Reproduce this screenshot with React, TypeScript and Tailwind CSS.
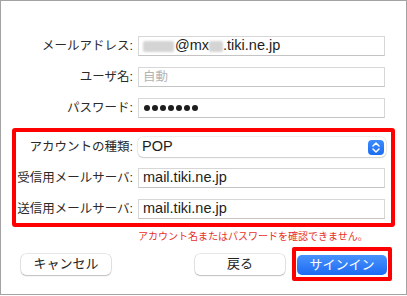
import React from 'react';

const JP = "font-['Liberation_Sans','Noto_Sans_CJK_JP',sans-serif]";

const Label: React.FC<{ w: string; children: React.ReactNode }> = ({ w, children }) => (
  <div className={`${w} shrink-0 text-right text-[12.5px] leading-[20px] text-[#2a2a2a]`}>{children}</div>
);

const Field: React.FC<{ children?: React.ReactNode }> = ({ children }) => (
  <div className="w-[247px] h-[20px] flex items-center pl-[4px] bg-white border border-[#d7d7d7] border-b-[#c4c4c4] text-[14.5px] text-[#1d1d1d]">
    {children}
  </div>
);

const Blur: React.FC<{ w: string }> = ({ w }) => (
  <span className={`${w} h-[11px] inline-block bg-[#d4d4d4] blur-[1px] rounded-[2px]`} />
);

export default function App() {
  return (
    <div className={`${JP} w-[407px] h-[295px] bg-white border border-[#a3a3a3] flex flex-col pt-[35px]`}>
      <div className="flex flex-col gap-[11px]">
        <div className="flex items-center gap-[5px]">
          <Label w="w-[132px]">メールアドレス:</Label>
          <Field>
            <Blur w="w-[31px]" />
            <span className="ml-[1px]">@mx</span>
            <Blur w="w-[14px]" />
            <span>.tiki.ne.jp</span>
          </Field>
        </div>
        <div className="flex items-center gap-[5px]">
          <Label w="w-[132px]">ユーザ名:</Label>
          <Field>
            <span className="text-[12.5px] text-[#b3b3b3]">自動</span>
          </Field>
        </div>
        <div className="flex items-center gap-[5px]">
          <Label w="w-[132px]">パスワード:</Label>
          <Field>
            <div className="flex gap-[2px] pl-[1px]">
              {Array.from({ length: 7 }).map((_, i) => (
                <span key={i} className="w-[6px] h-[6px] rounded-full bg-[#1d1d1d]" />
              ))}
            </div>
          </Field>
        </div>
      </div>

      <div className="mt-[10px] ml-[11px] w-[383px] border-4 border-[#ff0000] rounded-[3px] pt-[5px] pb-[4px] flex flex-col gap-[11px]">
        <div className="flex items-center gap-[5px]">
          <Label w="w-[117px]">アカウントの種類:</Label>
          <div className="w-[248px] h-[20px] flex items-center justify-between pl-[4px] pr-[2px] bg-white rounded-[5px] shadow-[0_0_0_0.5px_rgba(0,0,0,0.12),0_1px_1.5px_rgba(0,0,0,0.15)] text-[14.5px] text-[#1d1d1d]">
            <span>POP</span>
            <span className="w-[16px] h-[15px] rounded-[4px] bg-gradient-to-b from-[#3b8cff] to-[#1c6cf0] flex items-center justify-center">
              <svg width="8" height="11" viewBox="0 0 8 11" fill="none" stroke="white" strokeWidth="1.5" strokeLinecap="round" strokeLinejoin="round">
                <path d="M1 4 L4 1 L7 4" />
                <path d="M1 7 L4 10 L7 7" />
              </svg>
            </span>
          </div>
        </div>
        <div className="flex items-center gap-[5px]">
          <Label w="w-[117px]">受信用メールサーバ:</Label>
          <Field>mail.tiki.ne.jp</Field>
        </div>
        <div className="flex items-center gap-[5px]">
          <Label w="w-[117px]">送信用メールサーバ:</Label>
          <Field>mail.tiki.ne.jp</Field>
        </div>
      </div>

      <div className="mt-[3px] pl-[137px] text-[10px] leading-[14px] text-[#e8302a]">
        アカウント名またはパスワードを確認できません。
      </div>

      <div className="mt-[3px] flex items-center pl-[20px] pr-[14px]">
        <button className="w-[90px] h-[21px] rounded-[5px] bg-white shadow-[0_0_0_0.5px_rgba(0,0,0,0.18),0_1px_1.5px_rgba(0,0,0,0.18)] text-[13px] text-[#222]">
          キャンセル
        </button>
        <div className="flex-1" />
        <button className="w-[90px] h-[21px] rounded-[5px] bg-white shadow-[0_0_0_0.5px_rgba(0,0,0,0.18),0_1px_1.5px_rgba(0,0,0,0.18)] text-[13px] text-[#222]">
          戻る
        </button>
        <div className="ml-[7px] border-4 border-[#ff0000] rounded-[2px] p-[1px]">
          <button className="w-[90px] h-[20px] rounded-[5px] bg-gradient-to-b from-[#4a93fb] to-[#1b6af3] text-[13px] text-white">
            サインイン
          </button>
        </div>
      </div>
    </div>
  );
}
